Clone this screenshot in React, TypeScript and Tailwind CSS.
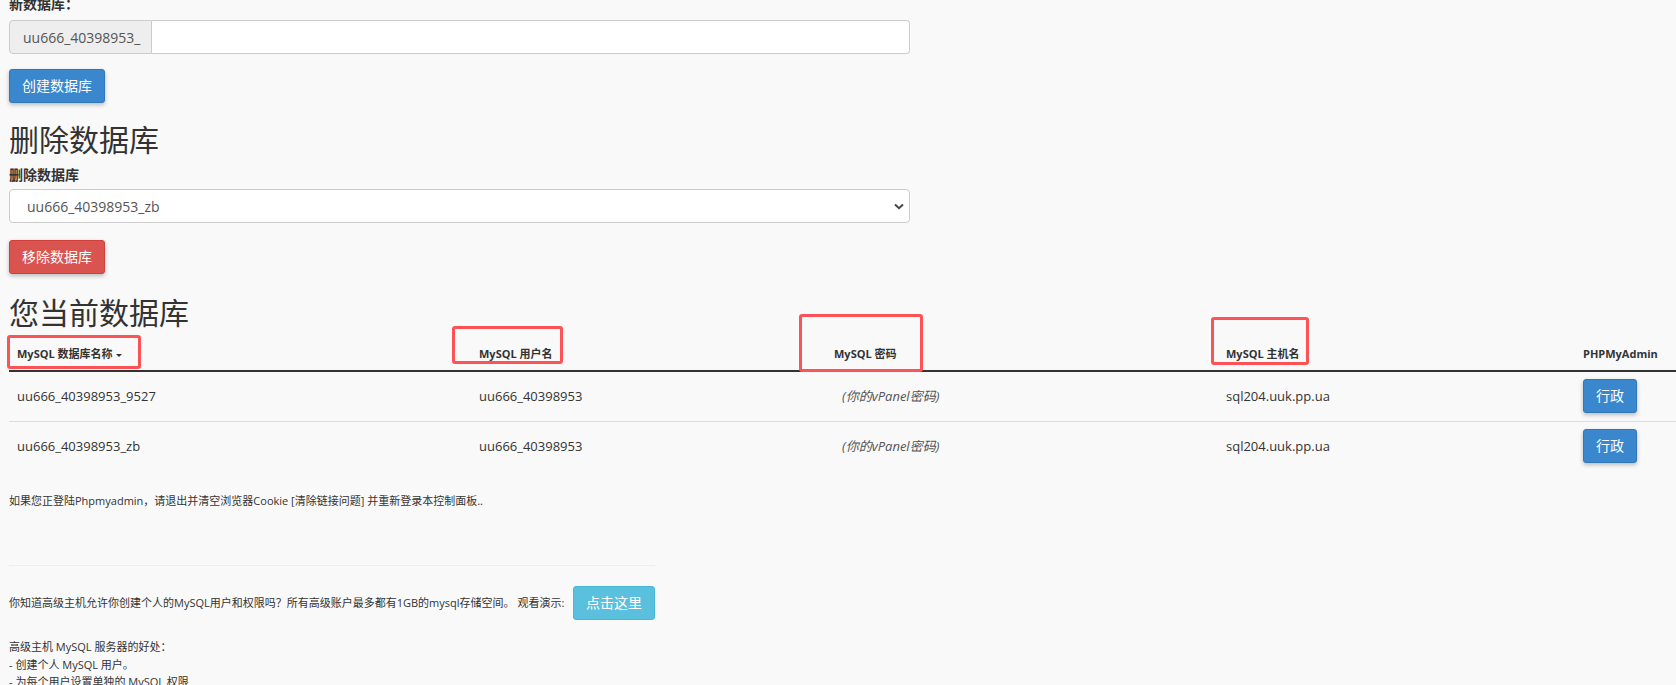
const rows = [
  { name: "uu666_40398953_9527", user: "uu666_40398953", host: "sql204.uuk.pp.ua" },
  { name: "uu666_40398953_zb", user: "uu666_40398953", host: "sql204.uuk.pp.ua" },
];

const btnBlue =
  "h-[34px] rounded-[3px] border border-[#2f78bb] bg-[#3a87cd] px-[12px] text-[14px] leading-none text-white shadow-[0_2px_4px_rgba(0,0,0,0.25)]";

export default function App() {
  return (
    <div className="relative h-[685px] overflow-hidden bg-[#f9f9f9] pl-[9px] font-['Open_Sans','Noto_Sans_CJK_SC',sans-serif] text-[#333]">
      <div className="-mt-[7px]">
        {/* new database */}
        <label className="block text-[14px] font-bold leading-[22px]">新数据库：</label>
        <div className="mt-[5px] flex h-[34px] w-[901px]">
          <span className="flex w-[143px] items-center rounded-l-[4px] border border-[#ccc] bg-[#eee] pl-[13px] text-[14px] text-[#555]">
            uu666_40398953_
          </span>
          <input className="flex-1 rounded-r-[4px] border border-l-0 border-[#ccc] bg-white outline-none" />
        </div>
        <button className={`mt-[15px] w-[96px] ${btnBlue}`}>创建数据库</button>

        {/* delete database */}
        <h3 className="mt-[20px] text-[30px] leading-[33px]">删除数据库</h3>
        <label className="mt-[9px] block text-[14px] font-bold leading-[20px]">删除数据库</label>
        <div className="mt-[4px] flex h-[34px] w-[901px] items-center justify-between rounded-[4px] border border-[#ccc] bg-white pl-[17px] pr-[4px] text-[14px] text-[#555]">
          <span>uu666_40398953_zb</span>
          <svg width="10" height="7" viewBox="0 0 10 7" className="mr-[1px]">
            <path d="M1 1.5 L5 5.2 L9 1.5" fill="none" stroke="#444" strokeWidth="2" />
          </svg>
        </div>
        <button className="mt-[17px] h-[34px] w-[96px] rounded-[3px] border border-[#d43f3a] bg-[#d9534f] px-[12px] text-[14px] leading-none text-white shadow-[0_2px_4px_rgba(0,0,0,0.25)]">
          移除数据库
        </button>

        {/* current databases */}
        <h3 className="mt-[22px] text-[30px] leading-[33px]">您当前数据库</h3>
        <table className="mt-[9px] w-[1667px] table-fixed border-collapse">
          <colgroup>
            <col className="w-[462px]" />
            <col className="w-[355px]" />
            <col className="w-[392px]" />
            <col className="w-[357px]" />
            <col className="w-[101px]" />
          </colgroup>
          <thead>
            <tr className="border-b-2 border-[#333] text-left align-bottom text-[11px] font-bold leading-[16px]">
              <th className="px-[8px] pb-[8px] pt-[8px]">
                MySQL 数据库名称
                <span className="ml-[3px] inline-block h-0 w-0 border-x-[3px] border-t-[3px] border-x-transparent border-t-[#333] align-middle" />
              </th>
              <th className="px-[8px] pb-[8px]">MySQL 用户名</th>
              <th className="px-[8px] pb-[8px]">MySQL 密码</th>
              <th className="px-[8px] pb-[8px]">MySQL 主机名</th>
              <th className="px-[8px] pb-[8px]">PHPMyAdmin</th>
            </tr>
          </thead>
          <tbody className="text-[13px]">
            {rows.map((r, i) => (
              <tr key={r.name} className={i === 0 ? "border-b border-[#ddd]" : ""}>
                <td className="h-[50px] px-[8px]">{r.name}</td>
                <td className="px-[8px]">{r.user}</td>
                <td className="px-[8px]">
                  <span className="pl-[8px] italic text-[#555]">(你的vPanel密码)</span>
                </td>
                <td className="px-[8px]">{r.host}</td>
                <td className="px-[8px]">
                  <button className={`w-[54px] ${btnBlue}`}>行政</button>
                </td>
              </tr>
            ))}
          </tbody>
        </table>

        <p className="mt-[22px] text-[11px] leading-[16px]">
          如果您正登陆Phpmyadmin，请退出并清空浏览器Cookie [清除链接问题] 并重新登录本控制面板..
        </p>

        <div className="w-[646px]">
          <hr className="mt-[56px] border-t border-[#eee]" />
          <div className="mt-[20px] flex h-[34px] items-center justify-between text-[11px]">
            <span>你知道高级主机允许你创建个人的MySQL用户和权限吗？所有高级账户最多都有1GB的mysql存储空间。 观看演示:</span>
            <button className="h-[34px] w-[82px] rounded-[3px] border border-[#46b8da] bg-[#5bc0de] text-[14px] leading-none text-white">
              点击这里
            </button>
          </div>
          <div className="mt-[18px] text-[11px] leading-[17.5px]">
            <p>高级主机 MySQL 服务器的好处：</p>
            <p>- 创建个人 MySQL 用户。</p>
            <p>- 为每个用户设置单独的 MySQL 权限</p>
          </div>
        </div>
      </div>

      {/* annotation boxes */}
      <div className="absolute left-[7px] top-[335px] h-[34px] w-[134px] rounded-[3px] border-[3px] border-[#fd5357]" />
      <div className="absolute left-[452px] top-[326px] h-[38px] w-[111px] rounded-[3px] border-[3px] border-[#fd5357]" />
      <div className="absolute left-[799px] top-[314px] h-[58px] w-[124px] rounded-[3px] border-[3px] border-[#fd5357]" />
      <div className="absolute left-[1211px] top-[317px] h-[48px] w-[98px] rounded-[3px] border-[3px] border-[#fd5357]" />
    </div>
  );
}
